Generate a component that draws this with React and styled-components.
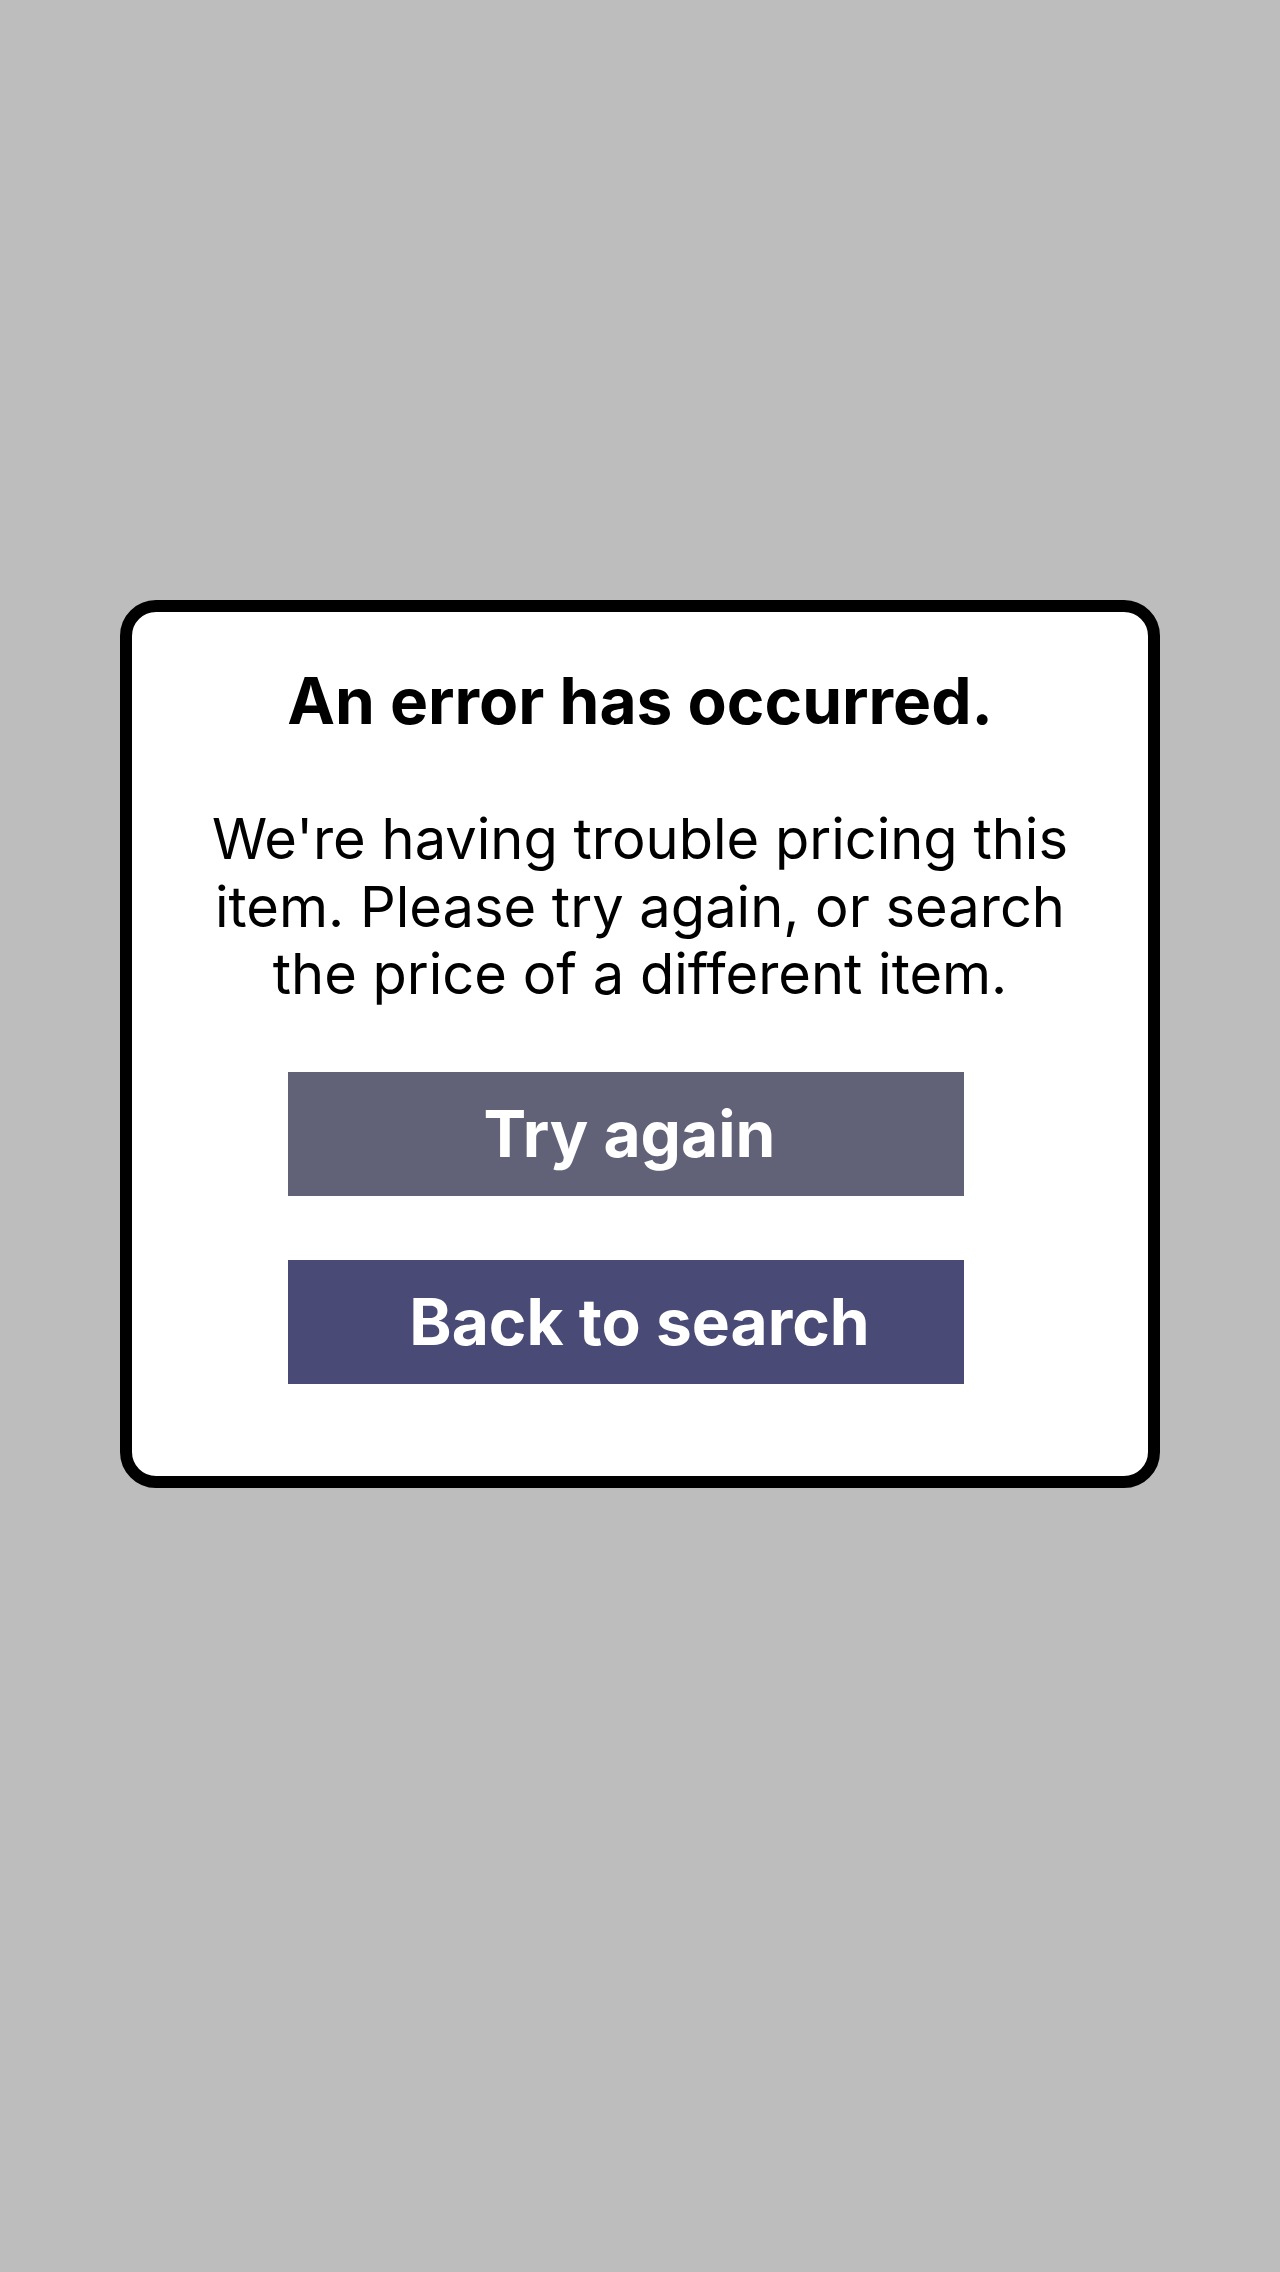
import React from "react";
import styled, { createGlobalStyle } from "styled-components";

const GlobalStyle = createGlobalStyle`
  html, body {
    margin: 0;
    padding: 0;
    background-color: #bdbdbd;
  }
  body {
    font-family: Inter, "Noto Sans", "Liberation Sans", sans-serif;
    color: #000;
  }
`;

const Page = styled.main`
  min-height: 2272px;
  padding-top: 600px;
  box-sizing: border-box;
  display: flex;
  justify-content: center;
  align-items: flex-start;
`;

const Card = styled.section`
  width: 1040px;
  box-sizing: border-box;
  background-color: white;
  border: 12px solid black;
  border-radius: 36px;
  padding: 50px 0 92px;
  display: flex;
  flex-direction: column;
  align-items: center;
`;

const Title = styled.h1`
  margin: 0;
  font-size: 64px;
  font-weight: 700;
  line-height: normal;
  text-align: center;
`;

const Message = styled.p`
  margin: 67px 0 0;
  max-width: 880px;
  font-size: 56px;
  font-weight: 400;
  line-height: 67.5px;
  text-align: center;
`;

const Actions = styled.div`
  margin-top: 63px;
  display: flex;
  flex-direction: column;
  align-items: center;
  gap: 64px;
`;

const Button = styled.button`
  width: 676px;
  height: 124px;
  margin-right: 28px;
  padding: 0 0 0 ${(props) => props.shift || 0}px;
  border: none;
  border-radius: 0;
  background-color: ${(props) => (props.primary ? "#4a4a77" : "#616178")};
  color: white;
  font-family: Inter, "Noto Sans", "Liberation Sans", sans-serif;
  font-size: 64px;
  font-weight: 700;
  line-height: normal;
  cursor: pointer;
`;

const App = () => {
  return (
    <>
      <GlobalStyle />
      <Page>
        <Card>
          <Title>An error has occurred.</Title>
          <Message>
            We're having trouble pricing this item. Please try again, or
            search the price of a different item.
          </Message>
          <Actions>
            <Button shift={7}>Try again</Button>
            <Button primary shift={27}>
              Back to search
            </Button>
          </Actions>
        </Card>
      </Page>
    </>
  );
};

export default App;
